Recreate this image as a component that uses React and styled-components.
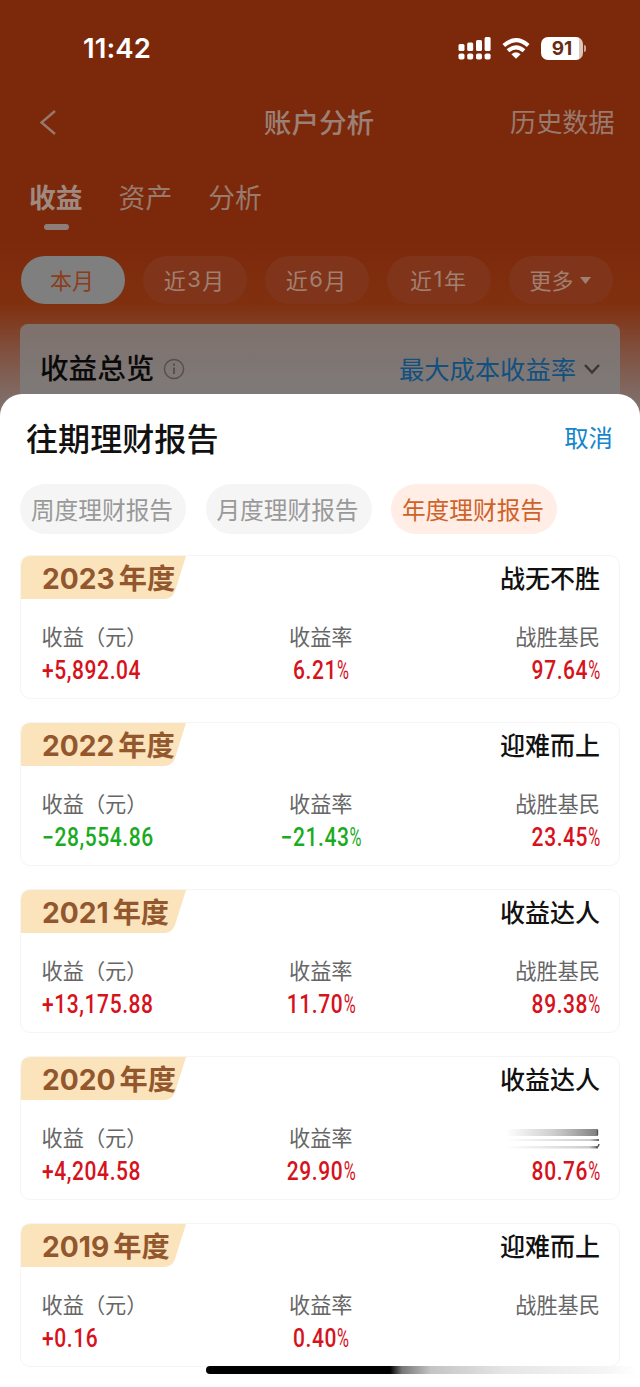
import styled, { createGlobalStyle, css } from "styled-components"

const periods = ["近3月", "近6月", "近1年"];
const reportTabs = ["周度理财报告", "月度理财报告", "年度理财报告"];

const reports = [
  { year: "2023", title: "战无不胜", profit: "+5,892.04", rate: "6.21", beat: "97.64" },
  { year: "2022", title: "迎难而上", profit: "-28,554.86", rate: "-21.43", beat: "23.45" },
  { year: "2021", title: "收益达人", profit: "+13,175.88", rate: "11.70", beat: "89.38" },
  { year: "2020", title: "收益达人", profit: "+4,204.58", rate: "29.90", beat: "80.76", smeared: true },
  { year: "2019", title: "迎难而上", profit: "+0.16", rate: "0.40", beat: "" },
];

export default function App() {
  return (
    <Screen>
      <GlobalStyle />
      <StatusBar>
        <Time>11:42</Time>
        <StatusIcons>
          <SignalIcon />
          <WifiIcon />
          <Battery><BatteryBody>91</BatteryBody><BatteryTip /></Battery>
        </StatusIcons>
      </StatusBar>
      <NavBar>
        <BackIcon />
        <NavTitle>账户分析</NavTitle>
        <NavLink>历史数据</NavLink>
      </NavBar>
      <Tabs>
        <Tab $active>收益</Tab>
        <Tab>资产</Tab>
        <Tab>分析</Tab>
      </Tabs>
      <Periods>
        <Period $active>本月</Period>
        {periods.map((p) => (
          <Period key={p}>{p[0]}<Digit>{p[1]}</Digit>{p[2]}</Period>
        ))}
        <Period>更多<Caret viewBox="0 0 11 7"><path d="M0 0h11L5.5 7z" /></Caret></Period>
      </Periods>
      <Overview>
        <OverviewTitle>收益总览</OverviewTitle>
        <InfoIcon />
        <OverviewLink>最大成本收益率</OverviewLink>
        <ChevronIcon />
      </Overview>
      <Sheet>
        <SheetHeader>
          <SheetTitle>往期理财报告</SheetTitle>
          <Cancel>取消</Cancel>
        </SheetHeader>
        <ReportTabs>
          {reportTabs.map((tab, i) => (
            <ReportTab key={tab} $active={i === 2}>{tab}</ReportTab>
          ))}
        </ReportTabs>
        <ReportList>
          {reports.map((report) => <ReportCard key={report.year} {...report} />)}
        </ReportList>
      </Sheet>
      <HomeIndicator />
    </Screen>
  )
}

function ReportCard({ year, title, profit, rate, beat, smeared }) {
  const down = profit.startsWith("-");
  return (
    <Card>
      <CardHeader>
        <Badge>
          <BadgeShape viewBox="0 0 164 44" preserveAspectRatio="none">
            <path d="M0 10Q0 0 10 0H164L153 36Q150 44 142 44H0z" />
          </BadgeShape>
          <Year>{year}</Year>年度
        </Badge>
        <CardTitle>{title}</CardTitle>
      </CardHeader>
      <Stats>
        <Stat>
          <Label>收益（元）</Label>
          <Value $down={down}>{profit.replace("-", "−")}</Value>
        </Stat>
        <Stat $align="center">
          <Label>收益率</Label>
          <Value $down={down} $align="center">{rate.replace("-", "−")}<Percent>%</Percent></Value>
        </Stat>
        <Stat $align="right">
          {smeared ? <Smear /> : <Label>战胜基民</Label>}
          {beat && <Value $align="right">{beat}<Percent>%</Percent></Value>}
        </Stat>
      </Stats>
    </Card>
  )
}

function SignalIcon() {
  return (
    <svg width="33" height="24" viewBox="0 0 33 24" fill="#fff">
      <rect x="0.5" y="8" width="6" height="7" rx="1.5" />
      <rect x="9.2" y="6.5" width="6" height="8.5" rx="1.5" />
      <rect x="18" y="4" width="6" height="11" rx="1.5" />
      <rect x="26.6" y="1" width="6" height="14" rx="1.5" />
      <rect x="0.5" y="17.5" width="6" height="6" rx="1.8" />
      <rect x="9.2" y="17.5" width="6" height="6" rx="1.8" />
      <rect x="18" y="17.5" width="6" height="6" rx="1.8" />
      <rect x="26.6" y="17.5" width="6" height="6" rx="1.8" />
    </svg>
  )
}

function WifiIcon() {
  return (
    <svg width="28" height="21" viewBox="0 0 28 21">
      <g fill="none" stroke="#fff" strokeWidth="4">
        <path d="M1.8 7.6Q14-3.2 26.2 7.6" />
        <path d="M6 12.8Q14 5.8 22 12.8" />
      </g>
      <path d="M9.4 16.2Q14 12.2 18.6 16.2L14 20.8z" fill="#fff" />
    </svg>
  )
}

function BackIcon() {
  return (
    <svg width="18" height="26" viewBox="0 0 18 26" fill="none" stroke="#96796d" strokeWidth="2.4">
      <path d="M16 2L2.5 13.5L16 25" />
    </svg>
  )
}

function InfoIcon() {
  return (
    <svg width="22" height="22" viewBox="0 0 22 22" fill="none" stroke="#55504e" strokeWidth="1.5">
      <circle cx="11" cy="11" r="9.6" />
      <path d="M11 9.5V16M11 5.5V7.7" strokeWidth="2" />
    </svg>
  )
}

function ChevronIcon() {
  return (
    <svg width="16" height="12" viewBox="0 0 16 12" fill="none" stroke="#393635" strokeWidth="2.4">
      <path d="M1 2L8 9.5L15 2" />
    </svg>
  )
}

// label dissolved into horizontal streaks, only its last stroke stays
function Smear() {
  return (
    <SmearBox>
      <svg width="94" height="22" viewBox="0 0 94 22">
        <defs>
          <linearGradient id="streak">
            <stop offset="0" stopColor="#888" stopOpacity="0" />
            <stop offset=".5" stopColor="#888" stopOpacity=".4" />
            <stop offset="1" stopColor="#666" stopOpacity=".85" />
          </linearGradient>
          <linearGradient id="streakLight">
            <stop offset="0" stopColor="#999" stopOpacity="0" />
            <stop offset=".9" stopColor="#999" stopOpacity=".5" />
            <stop offset="1" stopColor="#666" />
          </linearGradient>
        </defs>
        <rect y="1" width="92" height="7" fill="url(#streak)" />
        <rect y="11" width="93" height="2" fill="url(#streakLight)" />
        <rect y="18" width="92" height="2.5" fill="url(#streakLight)" />
        <path d="M91.5 2V7M90 19.5Q92.5 19.5 93 16" fill="none" stroke="#555" strokeWidth="1.4" />
      </svg>
    </SmearBox>
  )
}

const GlobalStyle = createGlobalStyle`
  body {
    margin: 0;
    background: #fff;
    font-family: Inter, "Noto Sans CJK SC", sans-serif;
  }
  * {
    box-sizing: border-box;
  }
  svg {
    display: block;
    flex: none;
  }
`
const Screen = styled.div`
  position: relative;
  width: 640px;
  height: 1387px;
  overflow: hidden;
  display: flex;
  flex-direction: column;
  white-space: nowrap;
  background: linear-gradient(#7c290b 0, #7c290b 240px, #80300f 305px, #80503e 350px, #807370 410px);
`
const StatusBar = styled.div`
  height: 88px;
  padding: 8px 54px 0 83px;
  display: flex;
  align-items: center;
  justify-content: space-between;
`
const Time = styled.div`
  color: #fff;
  font-size: 27.5px;
  font-weight: 600;
  letter-spacing: 0.1px;
`
const StatusIcons = styled.div`
  display: flex;
  align-items: center;
  gap: 11px;
`
const Battery = styled.div`
  display: flex;
  align-items: center;
  gap: 1px;
`
const BatteryBody = styled.div`
  width: 42px;
  height: 23px;
  border-radius: 7px;
  background: linear-gradient(90deg, #fff 38px, #d9c7be 38px);
  color: #6b2b12;
  font-size: 19px;
  font-weight: 700;
  line-height: 23px;
  text-align: center;
`
const BatteryTip = styled.div`
  width: 2px;
  height: 7px;
  border-radius: 0 2px 2px 0;
  background: #c9a592;
`
const NavBar = styled.div`
  height: 68px;
  padding: 0 25px 0 39px;
  display: grid;
  grid-template-columns: 105px 1fr 105px;
  align-items: center;
`
const NavTitle = styled.div`
  color: #9b8076;
  font-size: 27.6px;
  font-weight: 500;
  text-align: center;
  padding: 0 16px 3px 0;
`
const NavLink = styled.div`
  color: #987a6e;
  font-size: 26.2px;
  padding-bottom: 3px;
`
const Tabs = styled.div`
  height: 100px;
  padding: 22px 29px 0;
  display: flex;
  gap: 36px;
`
const Tab = styled.div`
  position: relative;
  height: 40px;
  line-height: 40px;
  color: #987a6e;
  font-size: 26.8px;
  ${({ $active }) => $active && css`
    color: #a08980;
    font-weight: 700;
    &::after {
      content: "";
      position: absolute;
      left: 15px;
      top: 46px;
      width: 25px;
      height: 6px;
      border-radius: 3px;
      background: #8f7d78;
    }
  `}
`
const Periods = styled.div`
  padding: 0 21px;
  display: flex;
  gap: 18px;
`
const Period = styled.div`
  width: 104px;
  height: 48px;
  padding: 0 2px 3px 0;
  border-radius: 24px;
  display: flex;
  align-items: center;
  justify-content: center;
  font-size: 22px;
  color: ${({ $active }) => ($active ? "#8b3d1c" : "#a08072")};
  background: ${({ $active }) => ($active ? "#7f7f7f" : "#80351b")};
`
const Digit = styled.span`
  margin: 0 1.5px;
`
const Caret = styled.svg`
  width: 11px;
  height: 7px;
  margin: 3px 0 0 6px;
  fill: #a08072;
`
const Overview = styled.div`
  height: 90px;
  margin: 20px 20px 0;
  padding: 0 20px 0 20px;
  border-radius: 8px 8px 0 0;
  display: flex;
  align-items: center;
  background: linear-gradient(#7f716c, #7e7a79 70px);
`
const OverviewTitle = styled.div`
  color: #0b0a0a;
  font-size: 28.6px;
  font-weight: 500;
  padding-bottom: 5px;
  margin-right: 9px;
`
const OverviewLink = styled.div`
  margin: 0 8px 0 auto;
  padding-bottom: 3px;
  color: #12507f;
  font-size: 25.3px;
`
const Sheet = styled.div`
  flex: 1;
  margin-top: -20px;
  border-radius: 22px 22px 0 0;
  background: #fff;
`
const SheetHeader = styled.div`
  height: 90px;
  padding: 0 27px 5px 26px;
  display: flex;
  align-items: center;
  justify-content: space-between;
`
const SheetTitle = styled.div`
  color: #111;
  font-size: 32.1px;
  font-weight: 500;
`
const Cancel = styled.div`
  color: #1485cc;
  font-size: 24.4px;
`
const ReportTabs = styled.div`
  padding: 0 20px;
  display: flex;
  gap: 19.5px;
`
const ReportTab = styled.div`
  width: 166px;
  height: 50px;
  padding-right: 2px;
  line-height: 53px;
  border-radius: 25px;
  text-align: center;
  font-size: 23.7px;
  color: ${({ $active }) => ($active ? "#cf6226" : "#999")};
  background: ${({ $active }) => ($active ? "#ffede6" : "#f5f5f5")};
`
const ReportList = styled.div`
  padding: 21.4px 20px 0;
  display: flex;
  flex-direction: column;
  gap: 22.9px;
`
const Card = styled.div`
  height: 144px;
  border: 1.5px solid #f5f5f5;
  border-radius: 10px;
  flex: none;
`
const CardHeader = styled.div`
  height: 43px;
  padding-right: 19px;
  display: flex;
  justify-content: space-between;
`
const Badge = styled.div`
  position: relative;
  width: 165px;
  padding-left: 21px;
  line-height: 46px;
  color: #93572e;
  font-size: 28.2px;
  font-weight: 700;
  z-index: 0;
`
const BadgeShape = styled.svg`
  position: absolute;
  inset: 0;
  width: 165px;
  height: 43px;
  fill: #fbe3bc;
  z-index: -1;
`
const Year = styled.span`
  margin-right: 4px;
  font-weight: 650;
`
const CardTitle = styled.div`
  color: #111;
  font-size: 25px;
  font-weight: 500;
  line-height: 46px;
`
const Stats = styled.div`
  padding: 21px 19px 0 20.5px;
  display: grid;
  grid-template-columns: 1fr 1fr 1fr;
`
const Stat = styled.div`
  text-align: ${({ $align }) => $align || "left"};
`
const Label = styled.div`
  height: 34px;
  line-height: 34px;
  color: #666;
  font-size: 21.2px;
`
// Roboto squeezed to the width of a DIN numeral
const Value = styled.div`
  height: 34px;
  line-height: 34px;
  color: ${({ $down }) => ($down ? "#1aab1f" : "#d6121c")};
  font-family: Roboto, sans-serif;
  font-size: 25px;
  font-weight: 550;
  letter-spacing: 0.7px;
  transform: scaleX(0.84);
  transform-origin: ${({ $align }) => $align || "left"};
`
const Percent = styled.span`
  display: inline-block;
  font-weight: 400;
  letter-spacing: 0;
  transform: scaleX(0.78);
  transform-origin: left;
  margin-right: -4px;
`
const SmearBox = styled.div`
  height: 34px;
  padding-top: 7px;
  display: flex;
  justify-content: flex-end;
`
const HomeIndicator = styled.div`
  position: absolute;
  left: 206px;
  top: 1366px;
  width: 430px;
  height: 8px;
  border-radius: 4px;
  background: linear-gradient(90deg, #000 184px, #777 196px, #c4c4c4 225px, #e6e6e6 300px, #f5f5f5 400px, #fff);
`
